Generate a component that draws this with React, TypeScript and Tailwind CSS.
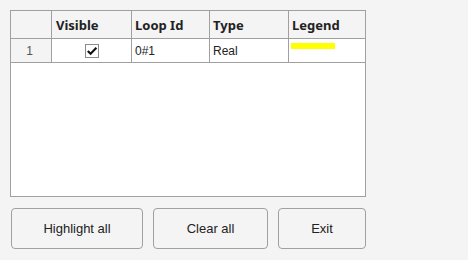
import React from "react";

const headFont = { fontFamily: '"Noto Sans", "Open Sans", sans-serif' };

export default function App() {
  return (
    <div className="w-[468px] h-[260px] bg-[#f4f4f4] pt-[10px] pl-[10px]" style={{ fontFamily: '"Liberation Sans", Arial, sans-serif' }}>
      <div className="w-[356px] h-[187px] border border-[#a0a0a0] bg-white flex flex-col">
        <div className="flex h-[28px] pt-[2px] bg-[#f4f4f4] border-b border-[#a0a0a0] text-[13px] font-bold text-[#222]" style={headFont}>
          <div className="w-[41px] border-r border-[#a0a0a0] -mt-[2px]" />
          <div className="w-[80px] border-r border-[#a0a0a0] -mt-[2px] pt-[2px] pl-[4px] flex items-center">Visible</div>
          <div className="w-[78px] border-r border-[#a0a0a0] -mt-[2px] pt-[2px] pl-[3px] flex items-center">Loop Id</div>
          <div className="w-[79px] border-r border-[#a0a0a0] -mt-[2px] pt-[2px] pl-[3px] flex items-center">Type</div>
          <div className="flex-1 pl-[3px] flex items-center">Legend</div>
        </div>
        <div className="flex h-[24px] border-b border-[#a0a0a0] text-[12px] text-[#222]">
          <div className="w-[41px] border-r border-[#a0a0a0] bg-[#f4f4f4] flex items-center justify-center pr-[3px] text-[#555]">1</div>
          <div className="w-[80px] border-r border-[#a0a0a0] flex items-center justify-center">
            <div className="w-[14px] h-[14px] border border-[#8a8a8a] bg-white flex items-center justify-center">
              <svg width="12" height="12" viewBox="0 0 12 12">
                <path d="M1.8 6 L4.6 8.8 L10.4 2.8" fill="none" stroke="#111" strokeWidth="2.1" />
              </svg>
            </div>
          </div>
          <div className="w-[78px] border-r border-[#a0a0a0] pl-[3px] flex items-center">0#1</div>
          <div className="w-[79px] border-r border-[#a0a0a0] pl-[3px] flex items-center">Real</div>
          <div className="flex-1 pl-[2px] pt-[4px]">
            <div className="w-[44px] h-[6px] bg-[#ffff00]" />
          </div>
        </div>
        <div className="flex-1" />
      </div>
      <div className="flex mt-[11px] ml-[1px] gap-[10px] text-[13px] text-[#222]">
        <button className="w-[132px] h-[41px] border border-[#a0a0a0] rounded-[4px] bg-[#f4f4f4]">Highlight all</button>
        <button className="w-[115px] h-[41px] border border-[#a0a0a0] rounded-[4px] bg-[#f4f4f4]">Clear all</button>
        <button className="w-[88px] h-[41px] border border-[#a0a0a0] rounded-[4px] bg-[#f4f4f4]">Exit</button>
      </div>
    </div>
  );
}
